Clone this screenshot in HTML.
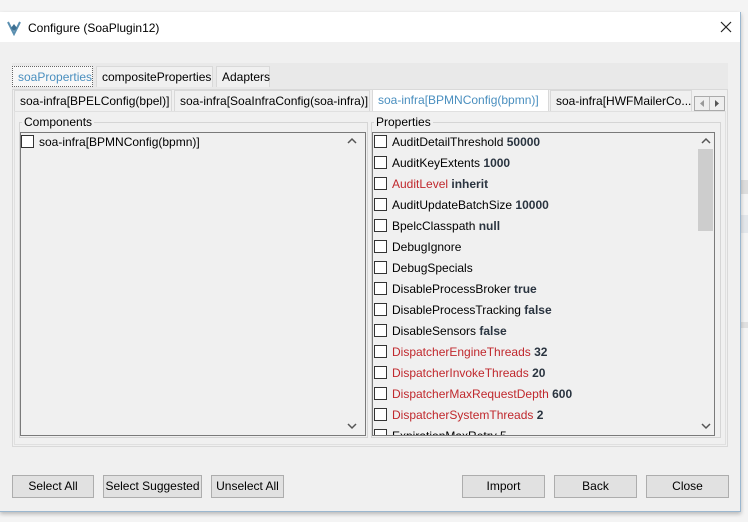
<!DOCTYPE html>
<html><head><style>
*{box-sizing:border-box;margin:0;padding:0}
body{width:748px;height:522px;background:#f4f4f4;font-family:"Liberation Sans",sans-serif;font-size:12px;color:#000;position:relative;overflow:hidden}
.abs{position:absolute}
.dlg{left:0;top:12px;width:741px;height:500px;background:#f0f0f0;border:1px solid #9bb7cf;border-left:none;box-shadow:0 2px 4px rgba(0,0,0,.25)}
.title{left:0;top:12px;width:740px;height:30px;background:#fff}
.tab{position:absolute;height:21px;line-height:20px;padding:0 5px;border:1px solid #d9d9d9;border-bottom:none;background:#f0f0f0;white-space:nowrap}
.btn{position:absolute;top:475px;height:23px;line-height:21px;text-align:center;background:#e1e1e1;border:1px solid #adadad}
.row{position:absolute;left:374px;height:21px;line-height:21px;white-space:nowrap}
.cb{display:inline-block;width:13px;height:13px;border:1px solid #333;background:#fff;vertical-align:-2px;margin-right:5px}
.r{color:#c0282d}
b{color:#2a3440}
.chev{position:absolute}
</style></head><body>
<div class="abs" style="left:741px;top:180px;width:7px;height:14px;background:#ddd"></div>
<div class="abs" style="left:741px;top:215px;width:7px;height:18px;background:#e3e6ea"></div>
<div class="abs" style="left:741px;top:322px;width:7px;height:6px;background:#e0e0e0"></div>
<div class="abs dlg"></div>
<div class="abs title"></div>
<svg class="abs" style="left:7px;top:20px" width="14" height="16" viewBox="0 0 14 16"><path d="M1 2 L7 14 L13 2" fill="none" stroke="#5a8fb0" stroke-width="2"/><path d="M7 4 L4 8 L7 11 L10 8Z" fill="#3d6f91"/></svg>
<div class="abs" style="left:28px;top:21px;font-size:12px">Configure (SoaPlugin12)</div>
<svg class="abs" style="left:720px;top:21px" width="12" height="12"><path d="M1 1L11 11M11 1L1 11" stroke="#222" stroke-width="1.2"/></svg>
<div class="abs" style="left:12px;top:63px;width:716px;height:26px;background:#e9e9e9"></div>
<div class="tab" style="left:12px;top:66px;width:81px;color:#4a8fbf;background:#f7f7f7;border:1px dotted #666">soaProperties</div>
<div class="tab" style="left:96px;top:66px;width:117px">compositeProperties</div>
<div class="tab" style="left:216px;top:66px;width:54px">Adapters</div>
<div class="abs" style="left:12px;top:89px;width:716px;height:358px;border:1px solid #d9d9d9;background:#f0f0f0"></div>
<div class="tab" style="left:14px;top:90px;width:158px">soa-infra[BPELConfig(bpel)]</div>
<div class="tab" style="left:174px;top:90px;width:196px">soa-infra[SoaInfraConfig(soa-infra)]</div>
<div class="tab" style="left:372px;top:89px;width:177px;height:23px;background:#fff;color:#4a8fbf">soa-infra[BPMNConfig(bpmn)]</div>
<div class="tab" style="left:550px;top:90px;width:142px;overflow:hidden">soa-infra[HWFMailerCo...</div>
<div class="abs" style="left:694px;top:96px;width:31px;height:15px;border:1px solid #aaa;background:#eee"></div>
<svg class="abs" style="left:694px;top:96px" width="31" height="15"><line x1="15.5" y1="1" x2="15.5" y2="14" stroke="#bbb"/><path d="M10 4L6 7.5L10 11Z" fill="#999"/><path d="M21 4L25 7.5L21 11Z" fill="#555"/></svg>
<div class="abs" style="left:14px;top:111px;width:712px;height:334px;border:1px solid #e0e0e0;background:#f0f0f0"></div>
<div class="abs" style="left:19px;top:122px;width:349px;height:316px;border:1px solid #d5d5d5"></div>
<div class="abs" style="left:22px;top:115px;background:#f0f0f0;padding:0 2px">Components</div>
<div class="abs" style="left:20px;top:132px;width:346px;height:304px;border:1px solid #7a7a7a"></div>
<div class="row" style="left:21px;top:132px"><span class="cb"></span>soa-infra[BPMNConfig(bpmn)]</div>
<svg class="chev" style="left:347px;top:137px" width="10" height="8"><path d="M1 6L5 2L9 6" fill="none" stroke="#555" stroke-width="1.5"/></svg>
<svg class="chev" style="left:347px;top:422px" width="10" height="8"><path d="M1 2L5 6L9 2" fill="none" stroke="#555" stroke-width="1.5"/></svg>
<div class="abs" style="left:371px;top:122px;width:350px;height:316px;border:1px solid #d5d5d5"></div>
<div class="abs" style="left:374px;top:115px;background:#f0f0f0;padding:0 2px">Properties</div>
<div class="abs" style="left:372px;top:132px;width:343px;height:304px;border:1px solid #7a7a7a;overflow:hidden">
<div class="abs" style="left:325px;top:16px;width:15px;height:82px;background:#cdcdcd"></div>
</div>
<svg class="chev" style="left:701px;top:137px" width="10" height="8"><path d="M1 6L5 2L9 6" fill="none" stroke="#555" stroke-width="1.5"/></svg>
<svg class="chev" style="left:701px;top:422px" width="10" height="8"><path d="M1 2L5 6L9 2" fill="none" stroke="#555" stroke-width="1.5"/></svg>
<div class="row" style="top:132px"><span class="cb"></span>AuditDetailThreshold <b>50000</b></div>
<div class="row" style="top:153px"><span class="cb"></span>AuditKeyExtents <b>1000</b></div>
<div class="row" style="top:174px"><span class="cb"></span><span class="r">AuditLevel</span> <b>inherit</b></div>
<div class="row" style="top:195px"><span class="cb"></span>AuditUpdateBatchSize <b>10000</b></div>
<div class="row" style="top:216px"><span class="cb"></span>BpelcClasspath <b>null</b></div>
<div class="row" style="top:237px"><span class="cb"></span>DebugIgnore</div>
<div class="row" style="top:258px"><span class="cb"></span>DebugSpecials</div>
<div class="row" style="top:279px"><span class="cb"></span>DisableProcessBroker <b>true</b></div>
<div class="row" style="top:300px"><span class="cb"></span>DisableProcessTracking <b>false</b></div>
<div class="row" style="top:321px"><span class="cb"></span>DisableSensors <b>false</b></div>
<div class="row" style="top:342px"><span class="cb"></span><span class="r">DispatcherEngineThreads</span> <b>32</b></div>
<div class="row" style="top:363px"><span class="cb"></span><span class="r">DispatcherInvokeThreads</span> <b>20</b></div>
<div class="row" style="top:384px"><span class="cb"></span><span class="r">DispatcherMaxRequestDepth</span> <b>600</b></div>
<div class="row" style="top:405px"><span class="cb"></span><span class="r">DispatcherSystemThreads</span> <b>2</b></div>
<div class="row" style="top:426px;height:9px;overflow:hidden;line-height:21px"><span class="cb"></span>ExpirationMaxRetry 5</div>
<div class="btn" style="left:12px;width:82px">Select All</div>
<div class="btn" style="left:103px;width:99px">Select Suggested</div>
<div class="btn" style="left:211px;width:73px">Unselect All</div>
<div class="btn" style="left:462px;width:83px">Import</div>
<div class="btn" style="left:554px;width:83px">Back</div>
<div class="btn" style="left:646px;width:83px">Close</div>
</body></html>
